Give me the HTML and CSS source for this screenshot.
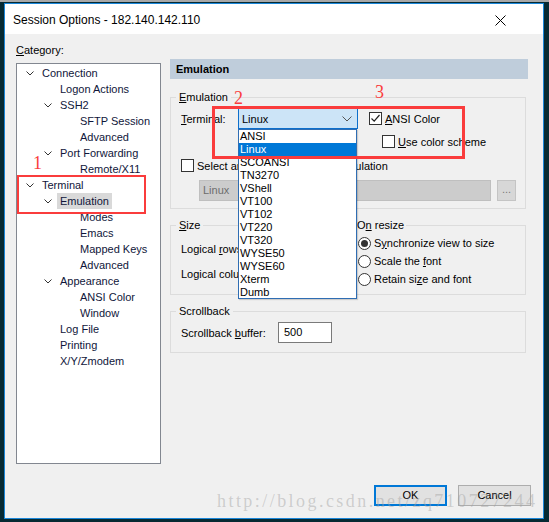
FILE: index.html
```html
<!DOCTYPE html>
<html>
<head>
<meta charset="utf-8">
<link rel="stylesheet" href="styles.css">
</head>
<body>
<div class="topstrip"></div>
<div class="window">
  <div class="titlebar">
    <span class="title">Session Options - 182.140.142.110</span>
    <svg class="close" width="11" height="11" viewBox="0 0 11 11"><path d="M0.5 0.5 L10.5 10.5 M10.5 0.5 L0.5 10.5" stroke="#000" stroke-width="1" fill="none"/></svg>
  </div>
  <div class="body">
    <div class="main">
      <div class="leftcol">
        <div class="catlabel"><u>C</u>ategory:</div>
        <div class="tree">
          <div class="ti l0"><span class="chev"><svg width="8" height="5" viewBox="0 0 8 5"><path d="M0.5 0.5 L4 4 L7.5 0.5" stroke="#333" fill="none"/></svg></span><span class="lbl">Connection</span></div>
          <div class="ti l1"><span class="chev"></span><span class="lbl">Logon Actions</span></div>
          <div class="ti l1"><span class="chev"><svg width="8" height="5" viewBox="0 0 8 5"><path d="M0.5 0.5 L4 4 L7.5 0.5" stroke="#333" fill="none"/></svg></span><span class="lbl">SSH2</span></div>
          <div class="ti l2"><span class="chev"></span><span class="lbl">SFTP Session</span></div>
          <div class="ti l2"><span class="chev"></span><span class="lbl">Advanced</span></div>
          <div class="ti l1"><span class="chev"><svg width="8" height="5" viewBox="0 0 8 5"><path d="M0.5 0.5 L4 4 L7.5 0.5" stroke="#333" fill="none"/></svg></span><span class="lbl">Port Forwarding</span></div>
          <div class="ti l2"><span class="chev"></span><span class="lbl">Remote/X11</span></div>
          <div class="ti l0"><span class="chev"><svg width="8" height="5" viewBox="0 0 8 5"><path d="M0.5 0.5 L4 4 L7.5 0.5" stroke="#333" fill="none"/></svg></span><span class="lbl">Terminal</span></div>
          <div class="ti l1"><span class="chev"><svg width="8" height="5" viewBox="0 0 8 5"><path d="M0.5 0.5 L4 4 L7.5 0.5" stroke="#333" fill="none"/></svg></span><span class="lbl sel">Emulation</span></div>
          <div class="ti l2"><span class="chev"></span><span class="lbl">Modes</span></div>
          <div class="ti l2"><span class="chev"></span><span class="lbl">Emacs</span></div>
          <div class="ti l2"><span class="chev"></span><span class="lbl">Mapped Keys</span></div>
          <div class="ti l2"><span class="chev"></span><span class="lbl">Advanced</span></div>
          <div class="ti l1"><span class="chev"><svg width="8" height="5" viewBox="0 0 8 5"><path d="M0.5 0.5 L4 4 L7.5 0.5" stroke="#333" fill="none"/></svg></span><span class="lbl">Appearance</span></div>
          <div class="ti l2"><span class="chev"></span><span class="lbl">ANSI Color</span></div>
          <div class="ti l2"><span class="chev"></span><span class="lbl">Window</span></div>
          <div class="ti l1"><span class="chev"></span><span class="lbl">Log File</span></div>
          <div class="ti l1"><span class="chev"></span><span class="lbl">Printing</span></div>
          <div class="ti l1"><span class="chev"></span><span class="lbl">X/Y/Zmodem</span></div>
        </div>
      </div>
      <div class="rightcol">
        <div class="header">Emulation</div>
        <fieldset class="group g-emu">
          <legend><u>E</u>mulation</legend>
          <div class="row1">
            <span class="termlabel"><u>T</u>erminal:</span>
            <div class="combo">
              <span class="combotext">Linux</span>
              <svg class="combochev" width="10" height="6" viewBox="0 0 10 6"><path d="M0.5 0.5 L5 5 L9.5 0.5" stroke="#555" fill="none"/></svg>
              <div class="droplist">
                <div class="di">ANSI</div>
                <div class="di hi">Linux</div>
                <div class="di">SCOANSI</div>
                <div class="di">TN3270</div>
                <div class="di">VShell</div>
                <div class="di">VT100</div>
                <div class="di">VT102</div>
                <div class="di">VT220</div>
                <div class="di">VT320</div>
                <div class="di">WYSE50</div>
                <div class="di">WYSE60</div>
                <div class="di">Xterm</div>
                <div class="di">Dumb</div>
              </div>
            </div>
            <span class="cb checked"><svg width="11" height="11" viewBox="0 0 11 11"><path d="M1.5 5.5 L4.2 8.2 L9.5 2" stroke="#222" stroke-width="1.2" fill="none"/></svg></span>
            <span class="cbtext"><u>A</u>NSI Color</span>
          </div>
          <div class="row2">
            <span class="cb"></span>
            <span class="cbtext"><u>U</u>se color scheme</span>
          </div>
          <div class="row3">
            <span class="cb"></span>
            <span class="cbtext">Select an alternate keyboard emulation</span>
          </div>
          <div class="row4">
            <div class="disfield">Linux</div>
            <div class="dotbtn">...</div>
          </div>
        </fieldset>
        <div class="sizerow">
          <fieldset class="group g-size">
            <legend><u>S</u>ize</legend>
            <div class="srow first"><span class="slabel">Logical <u>r</u>ows:</span><span class="sinput">24</span></div>
            <div class="srow"><span class="slabel">Logical colu<u>m</u>ns:</span><span class="sinput">80</span></div>
          </fieldset>
          <fieldset class="group g-resize">
            <legend>O<u>n</u> resize</legend>
            <div class="rrow first"><span class="radio on"></span><span class="rtext">S<u>y</u>nchronize view to size</span></div>
            <div class="rrow"><span class="radio"></span><span class="rtext">Scale the <u>f</u>ont</span></div>
            <div class="rrow"><span class="radio"></span><span class="rtext">Retain si<u>z</u>e and font</span></div>
          </fieldset>
        </div>
        <fieldset class="group g-scroll">
          <legend>Scrollback</legend>
          <div class="scrollrow"><span class="sblabel">Scrollback <u>b</u>uffer:</span><span class="sbinput">500</span></div>
        </fieldset>
      </div>
    </div>
    <div class="footer">
      <div class="btn ok">OK</div>
      <div class="btn">Cancel</div>
    </div>
  </div>
  <div class="redbox box1"></div>
  <div class="redbox box2"></div>
  <div class="rednum n1">1</div>
  <div class="rednum n2">2</div>
  <div class="rednum n3">3</div>
  <div class="watermark">http://blog.csdn.net/zq710727244</div>
</div>
</body>
</html>
```
FILE: styles.css
```css
html, body {
  margin: 0;
  padding: 0;
}
body {
  background: #062a33;
  width: 549px;
  height: 522px;
  overflow: hidden;
  font-family: "Liberation Sans", Arial, sans-serif;
  font-size: 11px;
  color: #000;
}
.topstrip {
  height: 2px;
  background: #a8a8a8;
}
.window {
  position: relative;
  margin: 1px 0 0 4px;
  width: 540px;
  height: 516px;
  box-sizing: border-box;
  border: 1px solid #1a86d9;
  background: #f0f0f0;
}
.titlebar {
  height: 30px;
  background: #fff;
  display: flex;
  align-items: center;
  justify-content: space-between;
  padding: 0 37px 0 8px;
}
.title {
  font-size: 12px;
  color: #000;
  padding-top: 2px;
}
.close {
  display: block;
  margin-top: 2px;
}
.body {
  padding-left: 11px;
}
.main {
  display: grid;
  grid-template-columns: 145px 358px;
  column-gap: 9px;
  align-items: start;
}
.leftcol {
  padding-top: 9px;
}
.catlabel {
  height: 14px;
  line-height: 14px;
}
.tree {
  margin-top: 6px;
  height: 401px;
  box-sizing: border-box;
  border: 1px solid #828790;
  background: #fff;
  padding-top: 1px;
  color: #10163a;
}
.ti {
  height: 16px;
  display: flex;
  align-items: center;
}
.ti.l0 { padding-left: 9px; }
.ti.l1 { padding-left: 27px; }
.ti.l2 { padding-left: 47px; }
.chev {
  width: 13px;
  height: 16px;
  display: flex;
  align-items: center;
  flex-shrink: 0;
}
.chev svg { display: block; }
.lbl {
  padding: 0 3px;
  height: 16px;
  line-height: 16px;
  white-space: nowrap;
}
.lbl.sel {
  background: #d9d9d9;
}
.rightcol {
  padding-top: 25px;
}
.header {
  height: 20px;
  line-height: 20px;
  background: #bfcddb;
  font-weight: bold;
  padding-left: 6px;
}
.group {
  margin: 0;
  padding: 0;
  border: 1px solid #dcdcdc;
  box-sizing: border-box;
  min-width: 0;
}
.group legend {
  padding: 0 3px;
  margin-left: -5px;
  line-height: 14px;
  height: 14px;
}
.g-emu {
  margin-top: 11px;
  width: 356px;
  height: 119px;
  padding: 0 0 0 10px;
}
.row1 {
  margin-top: 4px;
  height: 21px;
  display: flex;
  align-items: center;
}
.termlabel {
  width: 57px;
}
.combo {
  position: relative;
  width: 120px;
  height: 21px;
  box-sizing: border-box;
  border: 1px solid #0d6fcc;
  background: #cce4f7;
  display: flex;
  align-items: center;
  justify-content: space-between;
  padding: 0 5px 0 3px;
}
.combochev { display: block; }
.droplist {
  position: absolute;
  left: -1px;
  top: 20px;
  width: 119px;
  height: 170px;
  box-sizing: border-box;
  border: 1px solid #2f6db3;
  background: #fff;
  z-index: 5;
  box-shadow: 1px 1px 1px rgba(0,0,0,0.15);
}
.di {
  height: 13px;
  line-height: 13px;
  padding-left: 1px;
}
.di.hi {
  background: #0078d7;
  color: #fff;
}
.cb {
  width: 13px;
  height: 13px;
  box-sizing: border-box;
  border: 1px solid #333;
  background: #fff;
  display: inline-flex;
  align-items: center;
  justify-content: center;
  flex-shrink: 0;
}
.cb svg { display: block; }
.row1 .cb { margin-left: 11px; }
.cbtext {
  margin-left: 3px;
  white-space: nowrap;
}
.row2 {
  margin-top: 6px;
  height: 13px;
  display: flex;
  align-items: center;
  padding-left: 201px;
}
.row3 {
  margin-top: 11px;
  height: 13px;
  display: flex;
  align-items: center;
}
.row4 {
  margin-top: 8px;
  height: 21px;
  display: flex;
  padding-left: 18px;
}
.disfield {
  width: 292px;
  height: 21px;
  box-sizing: border-box;
  border: 1px solid #bfbfbf;
  background: #cccccc;
  color: #6d6d6d;
  line-height: 19px;
  padding-left: 3px;
}
.dotbtn {
  margin-left: 6px;
  width: 19px;
  height: 21px;
  box-sizing: border-box;
  border: 1px solid #c4c4c4;
  background: #d7d7d7;
  color: #7a7a7a;
  text-align: center;
  line-height: 17px;
}
.sizerow {
  margin-top: 9px;
  display: flex;
}
.g-size {
  width: 180px;
  height: 77px;
  padding-left: 10px;
}
.g-resize {
  margin-left: 3px;
  width: 173px;
  height: 77px;
  padding-left: 4px;
}
.g-resize legend {
  margin-left: -3px;
  padding: 0 2px;
}
.srow {
  height: 21px;
  display: flex;
  align-items: center;
  margin-top: 4px;
}
.srow.first { margin-top: 6px; }
.slabel {
  width: 100px;
  white-space: nowrap;
}
.sinput {
  width: 50px;
  height: 21px;
  box-sizing: border-box;
  border: 1px solid #7a7a7a;
  background: #fff;
  line-height: 19px;
  padding-left: 3px;
}
.rrow {
  height: 18px;
  display: flex;
  align-items: center;
}
.rrow.first { margin-top: 2px; }
.radio {
  width: 13px;
  height: 13px;
  box-sizing: border-box;
  border: 1px solid #333;
  border-radius: 50%;
  background: #fff;
  display: inline-flex;
  align-items: center;
  justify-content: center;
}
.radio.on::after {
  content: "";
  width: 7px;
  height: 7px;
  border-radius: 50%;
  background: #333;
}
.rtext {
  margin-left: 3px;
  white-space: nowrap;
}
.g-scroll {
  margin-top: 9px;
  width: 356px;
  height: 49px;
  padding-left: 10px;
}
.scrollrow {
  margin-top: 4px;
  height: 21px;
  display: flex;
  align-items: center;
}
.sblabel {
  width: 97px;
}
.sbinput {
  width: 54px;
  height: 21px;
  box-sizing: border-box;
  border: 1px solid #7a7a7a;
  background: #fff;
  line-height: 19px;
  padding-left: 5px;
}
.footer {
  margin-top: 21px;
  display: flex;
  justify-content: flex-end;
  gap: 11px;
  padding-right: 12px;
}
.btn {
  width: 73px;
  height: 21px;
  box-sizing: border-box;
  border: 1px solid #adadad;
  background: #e1e1e1;
  text-align: center;
  line-height: 19px;
}
.btn.ok {
  border: 2px solid #0078d7;
  line-height: 17px;
}
.redbox {
  position: absolute;
  box-sizing: border-box;
  border: 2px solid #fa3c3c;
  z-index: 10;
}
.box1 {
  left: 12px;
  top: 171px;
  width: 129px;
  height: 39px;
}
.box2 {
  left: 207px;
  top: 102px;
  width: 253px;
  height: 53px;
  border-width: 3px;
}
.rednum {
  position: absolute;
  font-family: "Liberation Serif", serif;
  font-size: 18px;
  line-height: 18px;
  color: #fa3c3c;
  z-index: 10;
}
.n1 { left: 28px; top: 150px; }
.n2 { left: 229px; top: 85px; }
.n3 { left: 370px; top: 79px; }
.watermark {
  position: absolute;
  left: 212px;
  top: 488px;
  font-family: "Liberation Serif", serif;
  font-size: 18px;
  line-height: 18px;
  letter-spacing: 2.45px;
  color: rgba(160, 160, 160, 0.45);
  white-space: nowrap;
  z-index: 20;
}
```
